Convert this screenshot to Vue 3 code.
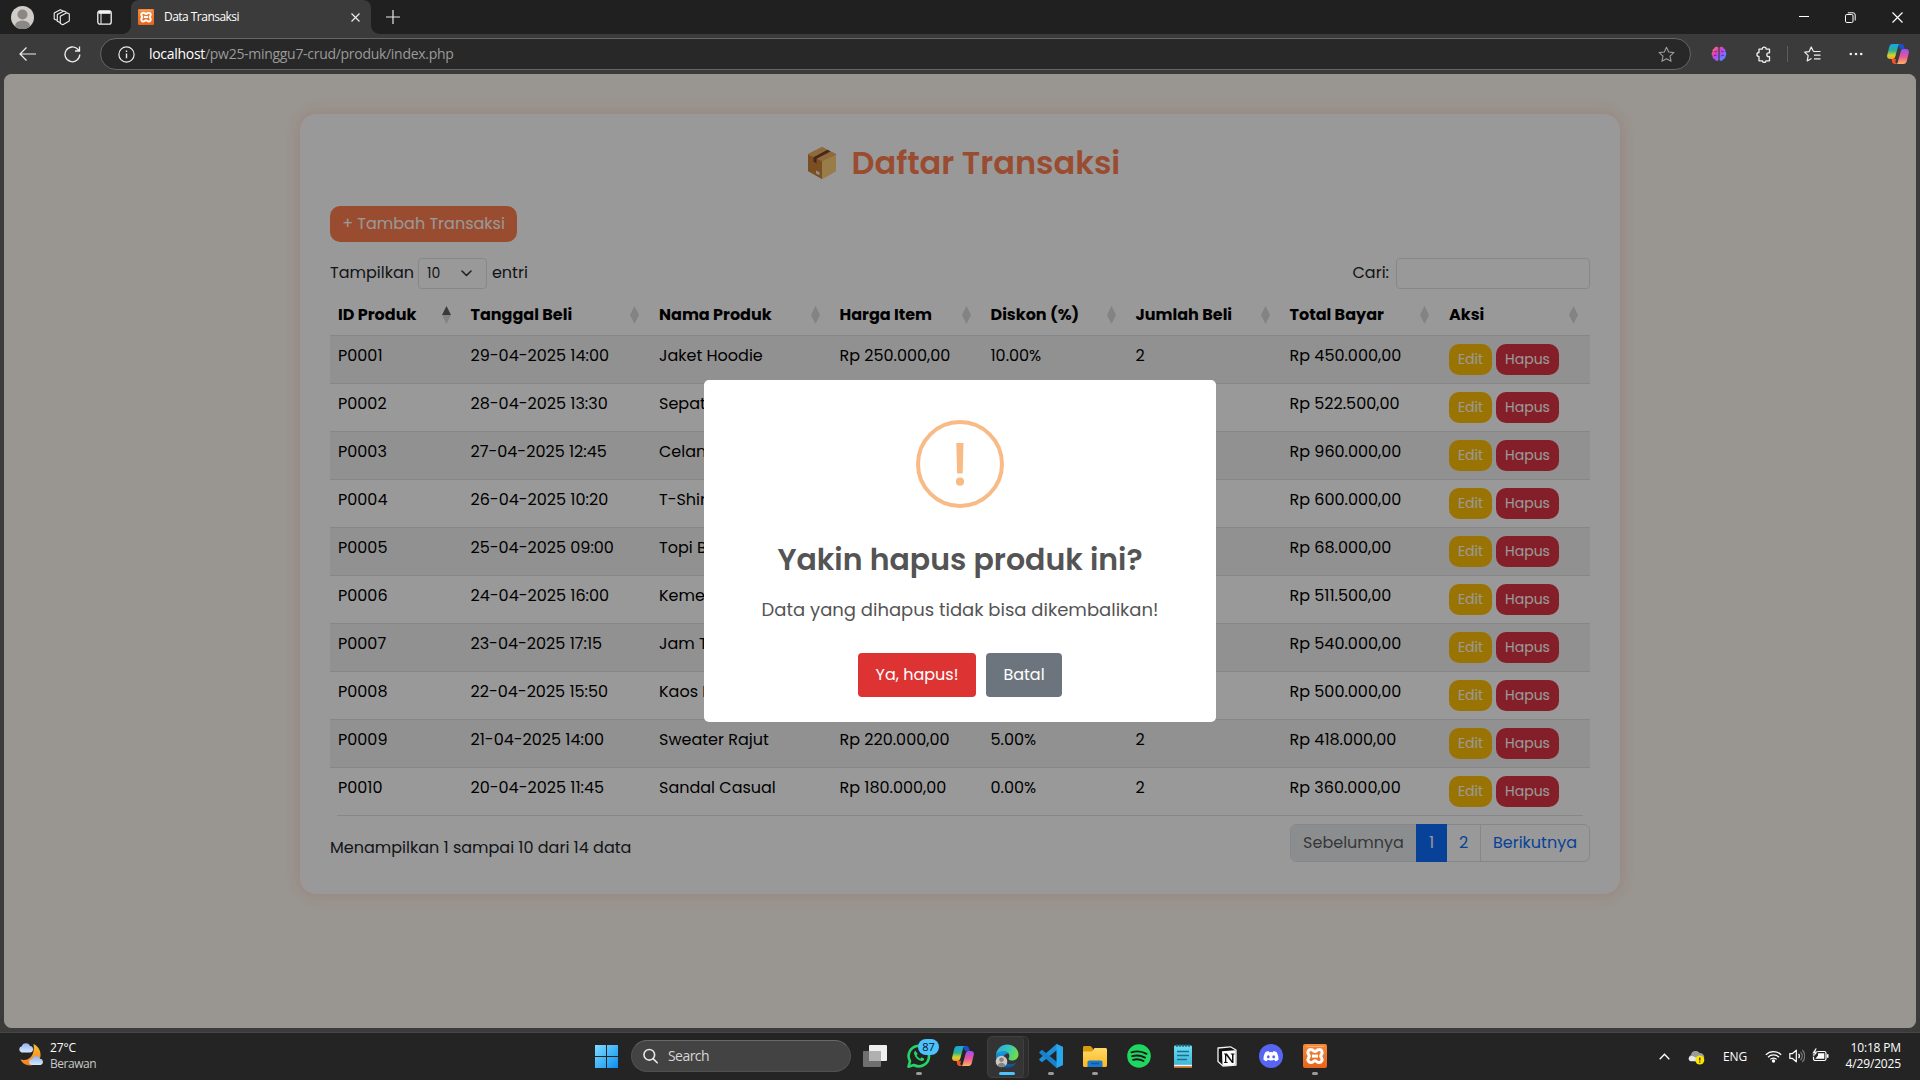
<script setup>
// Spreads a label's letters so it takes up the given width in pixels
const vFit = {
  mounted(el, { value }) {
    if (!value) return
    const natural = el.getBoundingClientRect().width
    const n = el.textContent.length
    el.style.letterSpacing = ((value - natural) / n).toFixed(3) + 'px'
  }
}

const columns = [
  { label: 'ID Produk', w: 132.5 },
  { label: 'Tanggal Beli', w: 188.5 },
  { label: 'Nama Produk', w: 180.5 },
  { label: 'Harga Item', w: 151 },
  { label: 'Diskon (%)', w: 145 },
  { label: 'Jumlah Beli', w: 154 },
  { label: 'Total Bayar', w: 159.5 },
  { label: 'Aksi', w: 149 }
]

const rows = [
  ['P0001', '29-04-2025 14:00', 'Jaket Hoodie', 'Rp 250.000,00', '10.00%', '2', 'Rp 450.000,00'],
  ['P0002', '28-04-2025 13:30', 'Sepatu', '', '', '', 'Rp 522.500,00'],
  ['P0003', '27-04-2025 12:45', 'Celana', '', '', '', 'Rp 960.000,00'],
  ['P0004', '26-04-2025 10:20', 'T-Shirt', '', '', '', 'Rp 600.000,00'],
  ['P0005', '25-04-2025 09:00', 'Topi Baseball', '', '', '', 'Rp 68.000,00'],
  ['P0006', '24-04-2025 16:00', 'Kemeja', '', '', '', 'Rp 511.500,00'],
  ['P0007', '23-04-2025 17:15', 'Jam Tangan', '', '', '', 'Rp 540.000,00'],
  ['P0008', '22-04-2025 15:50', 'Kaos Polos', '', '', '', 'Rp 500.000,00'],
  ['P0009', '21-04-2025 14:00', 'Sweater Rajut', 'Rp 220.000,00', '5.00%', '2', 'Rp 418.000,00'],
  ['P0010', '20-04-2025 11:45', 'Sandal Casual', 'Rp 180.000,00', '0.00%', '2', 'Rp 360.000,00']
]
</script>

<template>
  <div class="screen">
    <svg class="defs" width="0" height="0">
      <defs>
        <linearGradient id="cpA" x1="0" y1="0" x2="0" y2="1">
          <stop offset="0" stop-color="#16a6e8" /><stop offset=".45" stop-color="#2fb08f" /><stop offset=".75" stop-color="#d4d42a" /><stop offset="1" stop-color="#ff9a2a" />
        </linearGradient>
        <linearGradient id="cpB" x1="0" y1="0" x2="0" y2="1">
          <stop offset="0" stop-color="#9a4ff0" /><stop offset=".5" stop-color="#e8559a" /><stop offset="1" stop-color="#ffb35c" />
        </linearGradient>
        <linearGradient id="xam" x1="0" y1="0" x2="0" y2="1">
          <stop offset="0" stop-color="#f58a3c" /><stop offset="1" stop-color="#e8641a" />
        </linearGradient>
        <linearGradient id="win" x1="0" y1="0" x2="1" y2="1">
          <stop offset="0" stop-color="#7fdcff" /><stop offset="1" stop-color="#0a8ff0" />
        </linearGradient>
        <linearGradient id="brain" x1="0" y1="0" x2="1" y2="1">
          <stop offset="0" stop-color="#ff8a3c" /><stop offset=".35" stop-color="#e03fc0" /><stop offset=".6" stop-color="#9a5cff" /><stop offset="1" stop-color="#2fa8ff" />
        </linearGradient>
        <linearGradient id="edgeG" x1="0" y1="0" x2="1" y2=".3">
          <stop offset="0" stop-color="#2aa9e0" /><stop offset=".6" stop-color="#35c8b8" /><stop offset="1" stop-color="#6fdc4c" />
        </linearGradient>
        <linearGradient id="edgeB" x1="0" y1="0" x2="0" y2="1">
          <stop offset="0" stop-color="#1b9de2" /><stop offset="1" stop-color="#0c4f9e" />
        </linearGradient>
        <linearGradient id="fold" x1="0" y1="0" x2="0" y2="1">
          <stop offset="0" stop-color="#ffd968" /><stop offset="1" stop-color="#fbb81e" />
        </linearGradient>
        <linearGradient id="moon" x1="0" y1="0" x2="0" y2="1">
          <stop offset="0" stop-color="#fbc02d" /><stop offset="1" stop-color="#f57c1f" />
        </linearGradient>
        <linearGradient id="cloud" x1="0" y1="0" x2="0" y2="1">
          <stop offset="0" stop-color="#8fb4f2" /><stop offset="1" stop-color="#d9e6fb" />
        </linearGradient>
        <linearGradient id="note" x1="0" y1="0" x2="0" y2="1">
          <stop offset="0" stop-color="#6fdcf0" /><stop offset="1" stop-color="#3cb4d8" />
        </linearGradient>
        <symbol id="copilot" viewBox="0 0 22 20">
          <path d="M11 0h3.600c1.300 0 2 .8 2.300 1.900L17.800 5H13z" fill="#1c50c8" />
          <path d="M4.500 14.500 9 15l-.7 2.800c.5 1.500 1.200 2.200 2.700 2.200H7.400c-1.300 0-2-.8-2.300-1.900z" fill="#f0532a" />
          <path d="M5.600 0h7.600c-1.200 0-1.700.9-2.100 2.300L8.300 12.600C7.800 14.300 7 15 5.600 15H3C.8 15-.3 13.400.2 11.300L2.200 3C2.700 1 3.700 0 5.600 0z" fill="url(#cpA)" />
          <path d="M16.400 20H8.800c1.200 0 1.700-.9 2.100-2.300l2.800-10.300C14.200 5.700 15 5 16.400 5H19c2.200 0 3.300 1.600 2.800 3.700L19.800 17c-.5 2-1.500 3-3.400 3z" fill="url(#cpB)" />
        </symbol>
        <symbol id="xampp" viewBox="0 0 24 24">
          <rect width="24" height="24" rx="2" fill="url(#xam)" />
          <path d="M3 2.500h18" stroke="#fbb07a" stroke-width="1" />
          <path d="M8 5.500a3 3 0 0 0-2.600 4.700c.5.8 1 1.300 1 1.900s-.5 1.100-1 1.900A3 3 0 0 0 8 18.600c2 0 2.500-1.800 4-1.800s2 1.800 4 1.800a3 3 0 0 0 2.600-4.600c-.5-.8-1-1.300-1-1.900s.5-1.100 1-1.900A3 3 0 0 0 16 5.500c-2 0-2.500 1.900-4 1.900s-2-1.900-4-1.900z" fill="none" stroke="#fff" stroke-width="3" />
          <path d="M9 12.100h6" stroke="#fff" stroke-width="3" />
        </symbol>
      </defs>
    </svg>

    <header class="tabbar">
      <svg class="avatar" width="23" height="23" viewBox="0 0 23 23"><clipPath id="av"><circle cx="11.500" cy="11.500" r="11.500" /></clipPath><g clip-path="url(#av)"><rect width="23" height="23" fill="#d0ccc8" /><circle cx="11.500" cy="8.500" r="5" fill="#8b8784" /><ellipse cx="11.500" cy="20" rx="7.500" ry="5.500" fill="#8b8784" /></g></svg>
      <svg class="i-ws" width="17" height="17" viewBox="0 0 17 17" fill="none" stroke="#f0f0f0" stroke-width="1.100" stroke-linejoin="round"><path d="M7.300 7.200 13.800 3.700l2.500 1.200v7.200l-6.500 3.700-2.500-1.300z" /><path d="M7 13.500l-2.700-1.300V5.500L10.800 1.900l2.600 1.300" /><path d="M4 11.300 1.200 10V4L7.300.7l2.500 1" /></svg>
      <svg class="i-va" width="15" height="15" viewBox="0 0 15 15" fill="none" stroke="#f4f4f4" stroke-width="1.300"><rect x=".8" y=".8" width="13.400" height="13.400" rx="2.200" /><path d="M1.500 2.300h12" stroke-width="3" /><path d="M4 3v11" stroke-width="1" /></svg>
      <div class="tab">
        <svg width="16" height="16"><use href="#xampp" /></svg>
        <span v-fit="75" class="tab-title">Data Transaksi</span>
        <svg class="tab-x" width="9" height="9" viewBox="0 0 9 9" stroke="#e8e8e8" stroke-width="1.200"><path d="M.5.5l8 8M8.500.5l-8 8" /></svg>
      </div>
      <svg class="i-new" width="14" height="14" viewBox="0 0 14 14" stroke="#e8e8e8" stroke-width="1.200"><path d="M7 0v14M0 7h14" /></svg>
      <div class="winbtns">
        <svg width="10" height="10" viewBox="0 0 10 10"><path d="M0 4.500h10" stroke="#fff" /></svg>
        <svg width="11" height="11" viewBox="0 0 11 11" fill="none" stroke="#fff"><rect x=".5" y="2.500" width="7.500" height="8" rx="1.300" /><path d="M2.800.8h5.200a2.200 2.200 0 0 1 2.200 2.200v5.500" /></svg>
        <svg width="11" height="11" viewBox="0 0 11 11" stroke="#fff" stroke-width="1.200"><path d="M.5.5l10 10M10.500.5l-10 10" /></svg>
      </div>
    </header>

    <div class="toolbar">
      <svg class="i-back" width="17" height="14" viewBox="0 0 17 14" fill="none" stroke="#f0f0f0" stroke-width="1.200"><path d="M7.500.5 1 7l6.500 6.500M1 7h16" /></svg>
      <svg class="i-rel" width="17" height="17" viewBox="0 0 17 17" fill="none" stroke="#f0f0f0" stroke-width="1.300"><path d="M15.800 8.500A7.400 7.400 0 1 1 13.800 3.300L15.500 5M15.500.5V5H11" /></svg>
      <div class="url">
        <svg width="17" height="17" viewBox="0 0 17 17" fill="none" stroke="#ececec" stroke-width="1.200"><circle cx="8.500" cy="8.500" r="7.600" /><path d="M8.500 7.500v4.800M8.500 4.400v1.500" stroke-width="1.400" /></svg>
        <span class="addr"><b v-fit="56">localhost</b><span v-fit="248.500">/pw25-minggu7-crud/produk/index.php</span></span>
        <svg class="i-star" width="17" height="17" viewBox="0 0 17 17" fill="none" stroke="#9b9b9b" stroke-width="1.100" stroke-linejoin="round"><path d="m8.500 1.200 2.200 4.800 5.200.6-3.900 3.500 1.100 5.200-4.600-2.600-4.600 2.600L5 10.100 1.100 6.600 6.300 6z" /></svg>
      </div>
      <svg class="i-brain" width="16" height="16" viewBox="0 0 16 16"><path d="M7.400 1.500C6 .2 3.700.8 3.300 2.600 1.800 3 1.200 4.500 1.600 5.700.3 6.800.3 9 1.500 10c-.2 1.800.9 3 2.300 3.200.8 1.700 2.600 2 3.600 1zM8.600 1.500C10 .2 12.300.8 12.700 2.600c1.500.4 2.100 1.900 1.700 3.100 1.300 1.100 1.300 3.300.1 4.300.2 1.800-.9 3-2.300 3.200-.8 1.700-2.600 2-3.600 1z" fill="url(#brain)" /><path d="M3.500 5.500c1 .5 2 .2 2.200-.8M3 10c.8-1 2.200-1 2.800.2M12.500 5.500c-1 .5-2 .2-2.200-.8M13 10c-.8-1-2.200-1-2.800.2" fill="none" stroke="#4a2a78" stroke-width="1" /></svg>
      <svg class="i-ext" width="16" height="17" viewBox="0 0 16 17" fill="none" stroke="#f0f0f0" stroke-width="1.300" stroke-linejoin="round"><path d="M3 3.200h3.200a2 2 0 0 1 4 0h3.300v3.600h-.8a1.900 1.900 0 0 0 0 3.800h.8v4.200h-3.600a1.700 1.700 0 0 1-3.400 0H3v-4.200a2.050 2.050 0 0 1 0-4.100z" /></svg>
      <i class="vbar"></i>
      <svg class="i-fav" width="17" height="16" viewBox="0 0 17 16" fill="none" stroke="#f0f0f0" stroke-width="1.200" stroke-linejoin="round"><path d="M9.500 5.500 7.200 1 5.200 5.600.7 6.200l3.500 3.500-1 5.200 4.300-2.400M9.500 5.500h7M10 9.200h6.500M10 12.800h6.500" /></svg>
      <svg class="i-dots" width="14" height="4" viewBox="0 0 14 4" fill="#f0f0f0"><circle cx="1.800" cy="2" r="1.300" /><circle cx="7" cy="2" r="1.300" /><circle cx="12.200" cy="2" r="1.300" /></svg>
      <svg class="i-cop" width="22" height="20"><use href="#copilot" /></svg>
    </div>

    <main class="page">
      <section class="card">
        <h2>
          <svg width="28" height="32" viewBox="0 0 28 32"><path d="M14 0 28 7v17l-14 8L0 24V7z" fill="#e0a455" /><path d="M0 7.500 14 14v18L0 24z" fill="#cd8437" /><path d="M28 7.500 14 14v18l14-8z" fill="#ffd07a" /><path d="M0 7.500 14 0l14 7.500L14 14z" fill="#eeb163" /><path d="m5.500 10.200 14-7.400 3 1.700-14 7.200v4.800l-3-2z" fill="#764236" /><path d="m8 23.500 3.500 1.700v3L8 26.500z" fill="#f3eee6" /></svg>
          <span>Daftar Transaksi</span>
        </h2>
        <button class="add"><span>+ Tambah Transaksi</span></button>
        <div class="controls">
          <span class="lbl">Tampilkan</span>
          <div class="select"><span>10</span><svg width="11" height="7" viewBox="0 0 11 7" fill="none" stroke="#343a40" stroke-width="1.600"><path d="m1 1 4.500 4.500L10 1" stroke-linecap="round" stroke-linejoin="round" /></svg></div>
          <span class="lbl">entri</span>
          <span class="lbl cari">Cari:</span>
          <div class="input"></div>
        </div>
        <div class="table">
          <div class="tr th">
            <div v-for="(c, i) in columns" :key="c.label" class="td" :style="{ width: c.w + 'px' }">
              <span>{{ c.label }}</span>
              <svg class="sort" width="9" height="18" viewBox="0 0 9 18"><path d="M4.500 0 9 9H0z" :fill="i ? '#dadada' : '#5f5f5f'" /><path d="M0 9h9l-4.500 9z" fill="#dadada" /></svg>
            </div>
          </div>
          <div v-for="(r, ri) in rows" :key="ri" class="tr" :class="{ odd: ri % 2 === 0, last: ri === 9 }">
            <div v-for="(c, i) in r" :key="i" class="td" :style="{ width: columns[i].w + 'px' }"><span>{{ c }}</span></div>
            <div class="td acts"><button class="edit"><span>Edit</span></button><button class="del"><span>Hapus</span></button></div>
          </div>
        </div>
        <div class="foot">
          <span class="info">Menampilkan 1 sampai 10 dari 14 data</span>
          <div class="pager">
            <div class="pg prev"><span>Sebelumnya</span></div>
            <div class="pg cur"><span>1</span></div>
            <div class="pg two"><span>2</span></div>
            <div class="pg next"><span>Berikutnya</span></div>
          </div>
        </div>
      </section>
      <div class="overlay">
        <div class="modal">
          <svg class="warn" width="88" height="88" viewBox="0 0 88 88"><circle cx="44" cy="44" r="42" fill="none" stroke="#f8bb86" stroke-width="4" /><path d="M40.300 23h7.200l-.8 30.500h-5.600z" fill="#f8bb86" /><circle cx="44" cy="61.700" r="4.100" fill="#f8bb86" /></svg>
          <h3>Yakin hapus produk ini?</h3>
          <p>Data yang dihapus tidak bisa dikembalikan!</p>
          <div class="mbtns"><button class="yes"><span>Ya, hapus!</span></button><button class="no"><span>Batal</span></button></div>
        </div>
      </div>
    </main>

    <footer class="taskbar">
      <svg class="weather" width="26" height="23" viewBox="0 0 26 23"><path d="M15.500 1c5 2 8.200 8 6.700 13.500C20.500 20.500 14.500 23.500 9 22c-3-.8-5.500-3-6.500-5.500 5 1.500 10-.5 12-5 1.500-3.500 1.700-7 1-10.500z" fill="url(#moon)" /><path d="M3.500 9.500a3.200 3.200 0 0 1 .3-6.200A4.300 4.300 0 0 1 12 3a3.300 3.300 0 0 1 .5 6.500z" fill="url(#cloud)" /><path d="M14 22a3 3 0 0 1 .3-6 4 4 0 0 1 7.600-.3 3.200 3.200 0 0 1 .6 6.300z" fill="url(#cloud)" /></svg>
      <div class="wtext"><span v-fit="26">27°C</span><span v-fit="46" class="dim">Berawan</span></div>
      <svg class="start" width="23" height="23" viewBox="0 0 23 23" fill="url(#win)"><path d="M0 0h11v11H0zM12 0h11v11H12zM0 12h11v11H0zM12 12h11v11H12z" /></svg>
      <div class="search"><svg width="15" height="16" viewBox="0 0 16 16" fill="none" stroke="#e8e8e8" stroke-width="1.700"><circle cx="6.700" cy="6.700" r="5.700" /><path d="m11 11 4.200 4.200" stroke-linecap="round" /></svg><span v-fit="41">Search</span></div>
      <div class="apps">
        <div class="app"><svg width="24" height="22" viewBox="0 0 24 22"><rect y="6" width="18" height="16" rx="1" fill="#6f6f6f" /><rect x="6" width="18" height="16" rx="1" fill="#eee" /><path d="M6 6h12v10H6z" fill="#b0b0b0" /></svg></div>
        <div class="app run"><svg width="24" height="24" viewBox="0 0 24 24"><path d="M1.500 22.700 3 17.200A10.200 10.200 0 1 1 6.900 21z" fill="#222" stroke="#25d366" stroke-width="2.600" stroke-linejoin="round" /><path d="M8.500 6.800c-1 .3-1.600 1.500-1.400 2.700.6 3.300 3.700 6.800 7.300 7.500 1.500.2 2.800-.7 2.900-2.200l-2.700-1.500-1.300 1.400c-1.700-.7-3-2-3.700-3.500l1.100-1.300z" fill="#25d366" /></svg><span class="badge">87</span></div>
        <div class="app"><svg width="22" height="20"><use href="#copilot" /></svg></div>
        <div class="app active"><svg width="24" height="24" viewBox="0 0 24 24"><path d="M1 10.500C2 4.500 6.500.5 12.300.5 18.500.5 23.500 5 23.500 10.500c0 3.500-2.800 6-6.200 6-3 0-4.200-1.300-3.600-2.300 1.600-2.500.2-6.700-4.500-6.700-3.500 0-6.500 1-8.200 3z" fill="url(#edgeG)" /><path d="M1 10.500C2.700 8.500 6 7 9.500 7.300c2 .2 3.500 1 4.200 2.200-3-.5-5 1.500-5 4.200 0 4 3.800 7.300 8.300 6.500 1.800-.3 3.200-1 4.300-1.800-2 3.500-5.500 5.400-9.500 5.400C5 23.800.2 18 1 10.500z" fill="url(#edgeB)" /><circle cx="6.500" cy="17.500" r="5.800" fill="#cbc8c5" /><circle cx="6.500" cy="15.800" r="2.300" fill="#88827e" /><path d="M2.700 21.500a4 4 0 0 1 7.600 0 5.800 5.800 0 0 1-7.600 0z" fill="#88827e" /></svg></div>
        <div class="app run"><svg width="24" height="24" viewBox="0 0 24 24"><path d="M17.500 0 24 3l-6 3L3 18.200l-2.700-2.100v-1.200z" fill="#1c8fd6" /><path d="M17.500 24 24 21l-6-3L3 5.800.3 7.900v1.200z" fill="#1681cc" /><path d="M17.500 0 24 3v18l-6.500 3z" fill="#28a8ea" /></svg></div>
        <div class="app run"><svg width="24" height="22" viewBox="0 0 24 22"><path d="M0 2.500C0 1.500.7 1 1.500 1h6L10 3.500V9H0z" fill="#d99a10" /><path d="M0 6.500h9L11.500 3H22.500c.9 0 1.500.6 1.500 1.500V20.500c0 .9-.6 1.500-1.500 1.500H1.500C.6 22 0 21.400 0 20.500z" fill="url(#fold)" /><path d="M4.500 22v-4.500c0-1.200.8-2 2-2H17.500c1.200 0 2 .8 2 2V22z" fill="#1b79cc" /><path d="M8 18.500h8" stroke="#0f5aa5" stroke-width="1.500" /></svg></div>
        <div class="app"><svg width="24" height="24" viewBox="0 0 24 24"><circle cx="12" cy="12" r="11.800" fill="#1ed760" /><path d="M4.500 8.300c5-1.500 10.500-1 15 1.500M5.200 12.200c4.300-1.200 9-.7 12.800 1.400M6 15.800c3.600-.9 7.400-.5 10.500 1.200" fill="none" stroke="#191919" stroke-width="1.900" stroke-linecap="round" /></svg></div>
        <div class="app"><svg width="18" height="24" viewBox="0 0 18 24"><rect y="1.500" width="18" height="21" rx="1" fill="url(#note)" /><path d="M0 22h18v2H0z" fill="#c2702e" /><path d="M0 20.800h18v1.400H0z" fill="#f4f4f4" /><path d="M3 0v3M6 0v3M9 0v3M12 0v3M15 0v3" stroke="#125f78" stroke-width="1.300" /><path d="M3 7.500h12M3 11.500h12M3 15.500h10" stroke="#17708c" stroke-width="1.500" /></svg></div>
        <div class="app"><svg width="20" height="21" viewBox="0 0 20 21"><path d="M1 2 13.500.8 19 4v15L6 20 1 15.500z" fill="#111" stroke="#f2f2f2" stroke-width="1.300" stroke-linejoin="round" /><path d="M5 5.300 18.500 4.200v14.500L5.500 19.500z" fill="#fff" /><path d="M7 7.500h3l5 7V8.700L13.800 8.300V7.500H17.500v.8l-1 .4V17H15L9.300 9.500v6.300l1.400.5V17H7v-.7l1-.5V8.600L7 8.300z" fill="#111" /></svg></div>
        <div class="app"><svg width="24" height="24" viewBox="0 0 24 24"><circle cx="12" cy="12" r="12" fill="#5865f2" /><path d="M9.500 7c-1.200.2-2.300.6-3 1-1.500 2.300-2.100 4.800-2 7.700 1 .9 2.200 1.300 3.300 1.500l.8-1.400c2.200.8 4.600.8 6.800 0l.8 1.400c1.100-.2 2.300-.6 3.300-1.500.1-2.900-.5-5.400-2-7.700-.7-.4-1.800-.8-3-1l-.6 1.200a9 9 0 0 0-3.800 0z" fill="#fff" /><ellipse cx="9.300" cy="12.800" rx="1.400" ry="1.600" fill="#5865f2" /><ellipse cx="14.700" cy="12.800" rx="1.400" ry="1.600" fill="#5865f2" /></svg></div>
        <div class="app run"><svg width="24" height="24"><use href="#xampp" /></svg></div>
      </div>
      <div class="tray">
        <svg class="t-chev" width="11" height="7" viewBox="0 0 11 7" fill="none" stroke="#fff" stroke-width="1.400"><path d="M.7 6.200 5.500 1.200l4.800 5" /></svg>
        <svg class="t-od" width="17" height="14" viewBox="0 0 17 14"><path d="M3 9.500A3 3 0 0 1 3 4 4.700 4.700 0 0 1 11.500 2 4 4 0 0 1 14 9.500z" fill="#9b9b9b" /><path d="M2.600 10.300A2.700 2.700 0 0 1 3 5c2-.5 4 .8 6 2.500v2.800z" fill="#e6e6e6" /><circle cx="11.800" cy="9" r="4.500" fill="#fde300" /><path d="M11.800 6.500v3M11.800 10.500v1.200" stroke="#222" stroke-width="1.200" /></svg>
        <span v-fit="24" class="eng">ENG</span>
        <svg class="t-wifi" width="17" height="13" viewBox="0 0 17 13" fill="none" stroke="#fff" stroke-width="1.200"><path d="M.8 4.800a10.800 10.800 0 0 1 15.400 0M3 7.200a7.800 7.800 0 0 1 11 0M5.300 9.400a4.500 4.500 0 0 1 6.400 0" /><circle cx="8.500" cy="11" r="1.700" fill="#fff" stroke="none" /></svg>
        <svg class="t-vol" width="16" height="14" viewBox="0 0 16 14" fill="none" stroke="#fff" stroke-width="1.200"><path d="M.8 4.700h2.400L7.300 1.200v11.600L3.200 9.300H.8z" stroke-linejoin="round" /><path d="M9.500 4.800a3.300 3.300 0 0 1 0 4.400" /><path d="M11.500 2.800a6 6 0 0 1 0 8.400M13.300 1a8.500 8.500 0 0 1 0 12" stroke="#777" /></svg>
        <svg class="t-bat" width="17" height="14" viewBox="0 0 17 14"><rect x="1.500" y="3.500" width="12.500" height="9" rx="1.800" fill="none" stroke="#fff" stroke-width="1.200" /><path d="M6 5.300h6.300v5.500H3.300L6 7.500zM14.800 6.300h1.700v3.500h-1.700z" fill="#fff" /><path d="M3.500 0 0 5.500h2.200L1.500 9 6 4H3.600L5 0z" fill="#fff" stroke="#242424" stroke-width=".6" /></svg>
        <div class="clock"><span v-fit="50.500">10:18 PM</span><span v-fit="55.500">4/29/2025</span></div>
      </div>
    </footer>
  </div>
</template>

<style>
body { margin: 0; background: #3b3b3b; }
</style>

<style scoped>
* { box-sizing: border-box; }
.screen { width: 1920px; height: 1080px; overflow: hidden; display: flex; flex-direction: column; background: #3b3b3b; font-family: "Open Sans", "Noto Sans", sans-serif; color: #fff; }
.defs { position: absolute; }
svg { display: block; flex: none; }
span, b { white-space: nowrap; flex: none; }
button { border: 0; padding: 0; margin: 0; font: inherit; color: #fff; display: flex; align-items: center; justify-content: center; }

.tabbar { height: 34px; flex: none; background: #202020; display: flex; align-items: center; }
.avatar { margin-left: 11px; }
.i-ws { margin-left: 19px; }
.i-va { margin-left: 27px; }
.tab { position: relative; width: 240px; height: 34px; margin-left: 19px; background: #3b3b3b; border-radius: 8px 8px 0 0; display: flex; align-items: center; padding-left: 7px; }
.tab::before, .tab::after { content: ""; position: absolute; bottom: 0; width: 8px; height: 8px; }
.tab::before { left: -8px; background: radial-gradient(circle at 0 0, transparent 7.500px, #3b3b3b 8px); }
.tab::after { right: -8px; background: radial-gradient(circle at 100% 0, transparent 7.500px, #3b3b3b 8px); }
.tab-title { margin-left: 10px; font-size: 12px; line-height: 16px; }
.tab-x { margin-left: auto; margin-right: 11px; }
.i-new { margin-left: 15px; }
.winbtns { margin-left: auto; display: flex; align-items: center; gap: 36px; margin-right: 17px; }

.toolbar { height: 40px; flex: none; display: flex; align-items: center; }
.i-back { margin-left: 19px; }
.i-rel { margin-left: 28px; }
.url { width: 1591px; height: 32px; margin-left: 19px; border: 1px solid #666; border-radius: 16px; background: #282828; display: flex; align-items: center; padding-left: 17px; }
.addr { margin-left: 14px; font-size: 14px; line-height: 20px; color: #9a9a9a; display: flex; }
.addr b { font-weight: 400; color: #fff; }
.i-star { margin-left: auto; margin-right: 15px; }
.i-brain { margin-left: 20px; }
.i-ext { margin-left: 29px; }
.vbar { width: 1px; height: 16px; background: #5c5c5c; margin-left: 15px; }
.i-fav { margin-left: 16px; }
.i-dots { margin-left: 28px; }
.i-cop { margin-left: 24px; }

.page { position: relative; width: 1912px; height: 954px; flex: none; margin-left: 4px; padding-top: 40px; border-radius: 8px; background: #fff8f0; overflow: hidden; font-family: Poppins, Inter, sans-serif; color: #212529; font-size: 16px; }
.card { width: 1320px; height: 780px; margin: 0 auto; padding: 0 30px; border-radius: 16px; background: #fff; box-shadow: 0 0 15px rgba(255, 99, 71, .2); display: flex; flex-direction: column; }
h2 { margin: 30px 0 0; height: 38px; display: flex; align-items: center; font-size: 32px; font-weight: 600; color: #ff7f50; line-height: 38px; padding-left: 477.500px; gap: 16px; }
.add { margin-top: 24px; width: 187px; height: 36px; border-radius: 10px; background: #ff7f50; flex: none; }
.add span { position: relative; top: -1px; }
.controls { margin-top: 16px; height: 31px; display: flex; align-items: center; }
.lbl { line-height: 24px; padding-bottom: 2px; }
.select { width: 69px; height: 31px; margin: 0 5px 0 4px; border: 1px solid #dee2e6; border-radius: 4px; display: flex; align-items: center; padding: 0 14px 0 8px; justify-content: space-between; font-size: 14px; }
.cari { margin-left: auto; margin-right: 7px; }
.input { width: 194px; height: 31px; border: 1px solid #dee2e6; border-radius: 4px; }
.table { margin-top: 6px; color: #000; }
.tr { display: flex; height: 48px; border-bottom: 1px solid #dee2e6; }
.tr.odd { background: #f2f2f2; }
.tr.last { border-bottom-color: transparent; background: linear-gradient(#dee2e6, #dee2e6) 7px 100% / 1246px 1px no-repeat; background-origin: border-box; background-clip: border-box; }
.td { padding: 8px 8px 0; line-height: 24px; flex: none; }
.tr.th { height: 41px; font-weight: 700; border-radius: 10px 10px 0 0; }
.th .td { position: relative; }
.sort { position: absolute; right: 12px; top: 11px; }
.acts { display: flex; gap: 4px; }
.edit, .del { height: 31px; border-radius: 10px; font-size: 14px; padding-bottom: 1px; }
.edit { width: 43px; background: #ffc107; }
.del { width: 63px; background: #dc3545; }
.foot { display: flex; justify-content: space-between; margin-top: 8px; }
.info { line-height: 24px; margin-top: 12px; }
.pager { display: flex; width: 300px; height: 38px; border: 1px solid #dee2e6; border-radius: 6px; color: #0d6efd; }
.pg { display: flex; align-items: center; justify-content: center; line-height: 24px; }
.prev { width: 125px; background: #e9ecef; color: #595c5f; border-radius: 5px 0 0 5px; }
.cur { width: 31px; background: #0d6efd; color: #fff; margin: -1px 0; }
.two { width: 34px; border-right: 1px solid #dee2e6; }
.next { flex: 1; }

.overlay { position: absolute; inset: 0; background: rgba(0, 0, 0, .4); display: flex; align-items: center; justify-content: center; }
.modal { width: 512px; height: 342px; border-radius: 5px; background: #fff; color: #545454; display: flex; flex-direction: column; align-items: center; }
.warn { margin-top: 40px; }
h3 { margin: 34px 0 0; font-size: 30px; line-height: 36px; font-weight: 600; }
p { margin: 18px 0 0; font-size: 18px; line-height: 27px; }
.mbtns { display: flex; gap: 10px; margin-top: 30px; }
.yes, .no { height: 44px; border-radius: 4px; padding-bottom: 1px; }
.yes { width: 118px; background: #dd3333; }
.no { width: 76px; background: #6c757d; }

.taskbar { margin-top: 4px; height: 48px; flex: none; border-top: 1px solid #484848; background: #242424; display: flex; align-items: center; font-size: 12px; padding-bottom: 1px; }
.weather { margin-left: 18px; margin-bottom: 4px; }
.wtext { margin-left: 6px; width: 60px; display: flex; flex-direction: column; align-items: flex-start; line-height: 16px; }
.dim { color: #c8c8c8; }
.start { margin-left: 485px; }
.search { margin-left: 13px; width: 220px; height: 32px; border-radius: 16px; background: #434343; border: 1px solid #505050; border-top-color: #686868; display: flex; align-items: center; padding-left: 11px; font-size: 14px; color: #d6d6d6; }
.search span { margin-left: 10px; line-height: 20px; }
.apps { display: flex; margin-left: 2px; }
.app { position: relative; width: 44px; height: 46px; display: flex; align-items: center; justify-content: center; }
.run::after { content: ""; position: absolute; bottom: 4px; left: 19px; width: 6px; height: 3px; border-radius: 2px; background: #9a9a9a; }
.active::before { content: ""; position: absolute; left: 2px; top: 3px; width: 35px; height: 40px; border-radius: 5px; background: #343434; border: 1px solid #404040; box-shadow: 5px 0 0 -1px #2c2c2c, 5px 0 0 0 #3c3c3c; }
.active::after { content: ""; position: absolute; bottom: 4px; left: 14px; width: 16px; height: 3px; border-radius: 2px; background: #4cc2ff; }
.active svg { position: relative; }
.badge { position: absolute; left: 21px; top: 6px; width: 21px; height: 16px; border-radius: 8px; background: #4cc2ff; color: #111; font-size: 11px; line-height: 16px; text-align: center; }
.tray { margin-left: auto; display: flex; align-items: center; }
.t-od { margin-left: 18px; margin-top: 3px; }
.eng { margin-left: 18px; }
.t-wifi { margin-left: 18px; }
.t-vol { margin-left: 7px; }
.t-bat { margin-left: 7px; margin-bottom: 3px; }
.clock { width: 72px; margin-right: 19px; display: flex; flex-direction: column; align-items: flex-end; line-height: 16px; }
</style>
